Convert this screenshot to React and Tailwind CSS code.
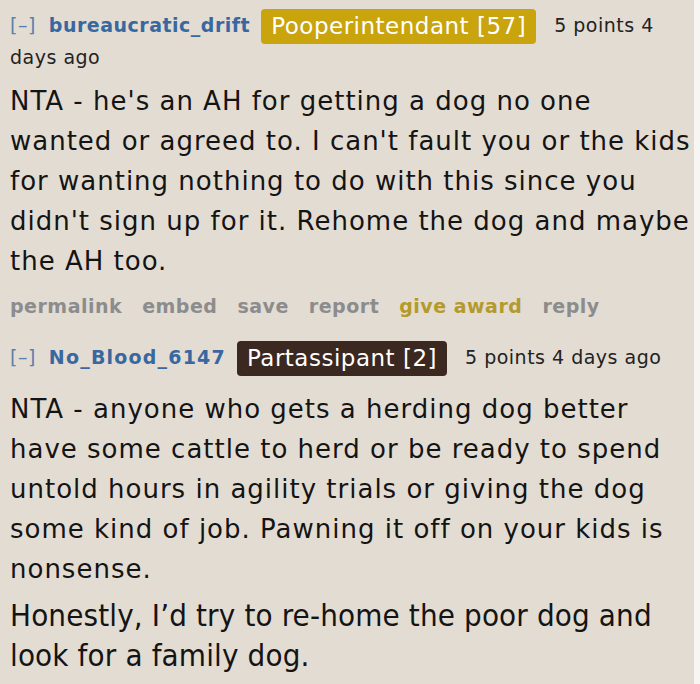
import React from "react";

const comments = [
  {
    author: "bureaucratic_drift",
    nameClass: "",
    flair: "Pooperintendant [57]",
    flairClass: "bg-[#c9a40c]",
    meta: ["5 points 4", "days ago"],
    wrapClass: "pt-[10px]",
    bodyClass: "mt-[8px]",
    paragraphs: [
      {
        lines: [
          "NTA - he's an AH for getting a dog no one",
          "wanted or agreed to. I can't fault you or the kids",
          "for wanting nothing to do with this since you",
          "didn't sign up for it. Rehome the dog and maybe",
          "the AH too.",
        ],
        condensed: false,
      },
    ],
    actions: true,
  },
  {
    author: "No_Blood_6147",
    nameClass: "tracking-[1.2px]",
    flair: "Partassipant [2]",
    flairClass: "bg-[#3b2820]",
    meta: ["5 points 4 days ago"],
    wrapClass: "pt-[16px]",
    bodyClass: "mt-[15px]",
    paragraphs: [
      {
        lines: [
          "NTA - anyone who gets a herding dog better",
          "have some cattle to herd or be ready to spend",
          "untold hours in agility trials or giving the dog",
          "some kind of job. Pawning it off on your kids is",
          "nonsense.",
        ],
        condensed: false,
      },
      {
        lines: [
          "Honestly, I\u2019d try to re-home the poor dog and",
          "look for a family dog.",
        ],
        condensed: true,
      },
    ],
    actions: false,
  },
];

function Comment({ c }) {
  return (
    <div className={c.wrapClass}>
      <p className="text-[19px] leading-[31px] tracking-[0.5px] text-[#222]">
        <span className="text-[#5b7fae] mr-[13px]">[–]</span>
        <span className={`font-bold text-[#38689f] mr-[11px] ${c.nameClass}`}>{c.author}</span>
        <span
          className={`${c.flairClass} inline-block text-white text-[23px] leading-[35px] px-[10px] -my-[2px] rounded-[4px] mr-[18px] align-middle`}
        >
          {c.flair}
        </span>
        <span>{c.meta[0]}</span>
        {c.meta[1] && (
          <>
            <br />
            <span>{c.meta[1]}</span>
          </>
        )}
      </p>
      <div className={c.bodyClass}>
        {c.paragraphs.map((p, i) => (
          <p
            key={i}
            className={
              p.condensed
                ? "text-[31px] leading-[40px] tracking-[0.15px] text-[#141414] mt-[6px] font-['DejaVu_Sans_Condensed',sans-serif]"
                : "text-[26px] leading-[40px] tracking-[1px] text-[#141414]"
            }
          >
            {p.lines.map((l) => (
              <span key={l} className="block whitespace-nowrap">
                {l}
              </span>
            ))}
          </p>
        ))}
      </div>
      {c.actions && (
        <div className="flex gap-[20px] mt-[5px] text-[19px] tracking-[0.5px] font-bold text-[#8c8c8c] leading-[40px]">
          <span>permalink</span>
          <span>embed</span>
          <span>save</span>
          <span>report</span>
          <span className="text-[#b49a2c]">give award</span>
          <span>reply</span>
        </div>
      )}
    </div>
  );
}

export default function App() {
  return (
    <div className="flex min-h-[684px] bg-[#f8f6f2] font-['DejaVu_Sans',Verdana,sans-serif]">
      <div className="w-[694px] shrink-0 bg-[#e3dcd3] pl-[10px] overflow-hidden">
        {comments.map((c) => (
          <Comment key={c.author} c={c} />
        ))}
      </div>
    </div>
  );
}
